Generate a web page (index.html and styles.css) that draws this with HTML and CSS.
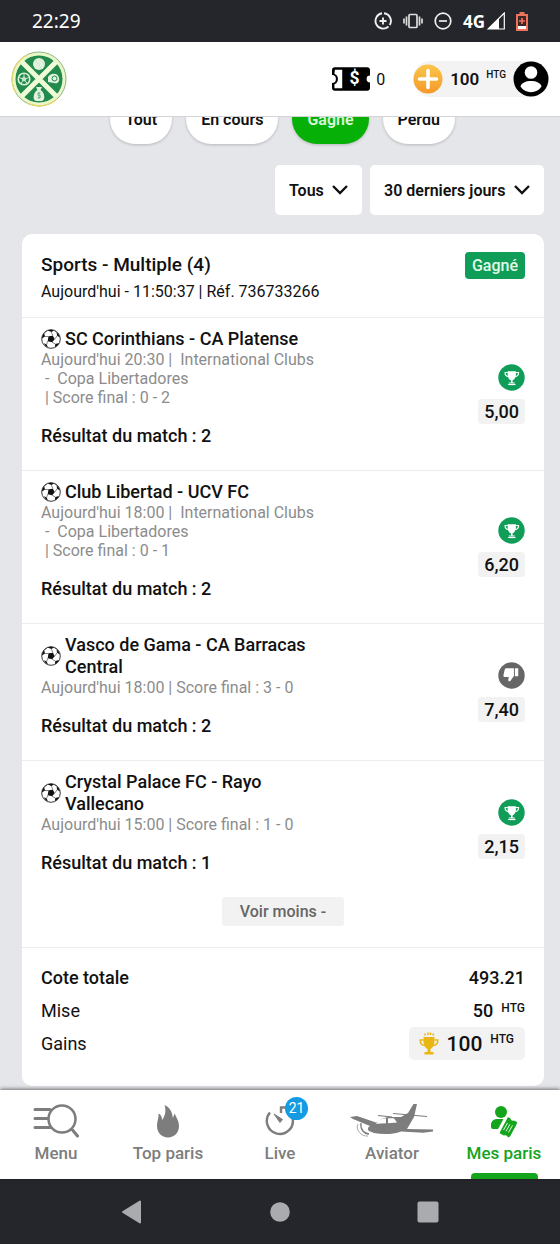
FILE: index.html
```html
<!DOCTYPE html>
<html lang="fr">
<head>
<meta charset="utf-8">
<meta name="viewport" content="width=device-width, initial-scale=1">
<title>Mes paris</title>
<link rel="stylesheet" href="styles.css">
</head>
<body>
<svg class="sprite" aria-hidden="true">
  <symbol id="ball" viewBox="0 0 20 20">
    <circle cx="10" cy="10" r="9.300" fill="#fff" stroke="#222" stroke-width=".9"/>
    <path d="M7.500 7.200l4.400-.4 1.800 3.400-2.600 3.100-4.400-1.100z" fill="#111"/>
    <path d="M6.500 1.600c2.200-1 4.800-1 6.500-.2l-2.600 1.700zM1 9.500c0-2 .8-4 2.200-5.300l.8 3.300zM15.500 3.200c1.800 1.200 3 3.200 3.400 5.300l-2.800-1.800zM3 14.300l2.700 1.200 1.300 3c-1.700-.6-3.200-2.200-4-4.200zM18 14c-.9 2-2.300 3.400-4.200 4.200l.5-3.200z" fill="#111"/>
    <path d="M10.400 3.100l1.500 3.700M4 7.500h3.500M16.100 6.700l-2.400 3.500M6.700 12.200l-1 3.300M11.100 13.300l3.200 1.700M3.200 4.200l3.300-2.600M13 1.400l2.500 1.800" fill="none" stroke="#333" stroke-width=".6"/>
  </symbol>
  <symbol id="won" viewBox="0 0 28 28">
    <circle cx="14" cy="14" r="13.700" fill="#0f9d58"/>
    <path d="M10 7.500h8.600v3.200c0 3.500-1.500 5.700-3.500 6.300v2.100h2.300v1h-6.200v-1h2.300V17c-2-.6-3.500-2.800-3.500-6.300z" fill="#fff"/>
    <path d="M10.200 8.800H7.300c0 2.600 1.500 4 3.600 4.200M18.400 8.800h2.900c0 2.600-1.500 4-3.600 4.200" fill="none" stroke="#fff" stroke-width="1.200"/>
    <path d="M10.500 21.300h7.600" stroke="#fff" stroke-width="1.200"/>
  </symbol>
  <symbol id="lost" viewBox="0 0 28 28">
    <circle cx="14" cy="14" r="13.700" fill="#666"/>
    <path d="M8.700 6.500H16.500v8l-3.900 5.400c-1.500.4-2.200-.5-1.900-2l.5-2.300H7.400c-1.400 0-2-.8-1.700-2L7 7.800c.3-.9.900-1.300 1.700-1.300zM17.500 6.500H21v8.300h-3.500z" fill="#fff"/>
  </symbol>
</svg>

<div class="status">
  <span class="clock">22:29</span>
  <div class="status-icons">
    <svg width="18" height="18" viewBox="0 0 18 18" fill="none" stroke="#eee" stroke-width="1.900"><path d="M8 1.300A7.700 7.700 0 1 0 14.500 14.500M10 1.300A7.700 7.700 0 0 1 15.800 12.900M9 5.500v7M5.500 9h7"/></svg>
    <svg width="20" height="16" viewBox="0 0 20 16" fill="none" stroke="#ddd" stroke-width="1.700"><rect x="6" y="1.500" width="8" height="13" rx="1"/><path d="M3.500 3.500v9M1 5.500v5M16.500 3.500v9M19 5.500v5"/></svg>
    <svg width="18" height="18" viewBox="0 0 18 18" fill="none" stroke="#eee" stroke-width="1.700"><circle cx="9" cy="9" r="7.800"/><path d="M5 9h8"/></svg>
    <span class="network">4G<svg width="18" height="18" viewBox="0 0 18 18"><path d="M17.300 1v16H1z" fill="none" stroke="#fff" stroke-width="1.200"/><path d="M12 6.300V17H1z" fill="#fff"/></svg></span>
    <svg width="12" height="19" viewBox="0 0 12 19"><path d="M3.500 0h5v2H12v17H0V2h3.500z" fill="#ee735c"/><path d="M2 4h8v10H2z" fill="#402525"/><path d="M2 14h8v3H2z" fill="#fff"/><path d="M6 6v6M3 9h6" stroke="#ee735c" stroke-width="1.700"/></svg>
  </div>
</div>

<header class="header">
  <a class="logo" href="#" aria-label="Accueil">
    <svg width="56" height="56" viewBox="0 0 56 56">
      <circle cx="28" cy="28" r="27" fill="#e9f7c9" stroke="#8fb58a"/>
      <path d="M16 4.200A27 27 0 0 0 5 42M16 51.900A27 27 0 0 0 46 48" fill="none" stroke="#ecd76c" stroke-width="1.200"/>
      <circle cx="28" cy="28" r="23.500" fill="#218a4c"/>
      <path d="M11 11l34 34M45 11L11 45" stroke="#effbd6" stroke-width="5"/>
      <circle cx="28" cy="13" r="6" fill="#e2f2df"/>
      <path d="M24 10c3 2 5 4 6 8M28 8c2 1 4 3 5 6" stroke="#cfe6d0" fill="none"/>
      <circle cx="13" cy="28" r="5.800" fill="#218a4c" stroke="#d8efd6" stroke-width="1.600"/>
      <path d="M13 26l2 1.500-.8 2.300h-2.400L11 27.500zM13 23v3M8 26.500l3 1M18 26.500l-3 1M9.800 32.500l2-2.700M16.200 32.500l-2-2.700" fill="#c4e5c8" stroke="#d8efd6" stroke-width=".9"/>
      <path d="M37 26c2-4 10-5 11 1 1 4-2 6-5 5l-6-1z" fill="#e2f2df"/>
      <circle cx="43.500" cy="27.500" r="2.500" fill="#e2f2df" stroke="#218a4c"/>
      <path d="M25 36h6l-1.500 3c4 2 5.500 10 1.500 11h-6c-4-1-2.500-9 1.500-11z" fill="#e2f2df"/>
      <path d="M29.500 42h-2.500v2.300h2.300v2.300h-2.600M28 41v7" fill="none" stroke="#5ca874" stroke-width=".8"/>
    </svg>
  </a>
  <div class="account">
    <div class="tickets">
      <svg width="38" height="24" viewBox="0 0 39 24"><path d="M3 0h33q3 0 3 3v5.500a3.500 3.500 0 0 0 0 7V21q0 3-3 3H3q-3 0-3-3v-5a4 4 0 0 0 0-8V3q0-3 3-3z" fill="#000"/><path d="M3 2.500h7.500v19H2.500V17.500a6 6 0 0 0 0-11z" fill="#fff"/><text x="23" y="17.500" class="ticket-sign">$</text></svg>
      <span>0</span>
    </div>
    <div class="balance">
      <button class="icon-button" type="button" aria-label="Déposer">
        <svg width="30" height="30" viewBox="0 0 30 30"><defs><linearGradient id="gold" x2="0" y2="1"><stop stop-color="#fbc64a"/><stop offset="1" stop-color="#f5982a"/></linearGradient></defs><circle cx="15" cy="15" r="14.500" fill="url(#gold)"/><path d="M15 6.500v17M6.500 15h17" stroke="#fff" stroke-width="3.600" stroke-linecap="round"/></svg>
      </button>
      <strong>100</strong><span class="unit">HTG</span>
      <button class="icon-button" type="button" aria-label="Profil">
        <svg width="36" height="36" viewBox="0 0 36 36"><circle cx="18" cy="18" r="17.500"/><circle cx="18" cy="11.500" r="6.300" fill="#fff"/><path d="M7.500 25.500c1-7.500 20-7.500 21 0-4.500 7.500-16.500 7.500-21 0z" fill="#fff"/></svg>
      </button>
    </div>
  </div>
</header>

<main class="main">
  <div class="tabs">
    <button class="tab" type="button">Tout</button>
    <button class="tab" type="button">En cours</button>
    <button class="tab tab-active" type="button">Gagné</button>
    <button class="tab" type="button">Perdu</button>
  </div>

  <div class="filters">
    <div class="filter">
      <select aria-label="Type de pari"><option>Tous</option></select>
      <svg class="chevron" width="16" height="10" viewBox="0 0 16 10"><path d="M1 1l7 7 7-7" fill="none" stroke="#111" stroke-width="2.400"/></svg>
    </div>
    <div class="filter">
      <select aria-label="Période"><option>30 derniers jours</option></select>
      <svg class="chevron" width="16" height="10" viewBox="0 0 16 10"><path d="M1 1l7 7 7-7" fill="none" stroke="#111" stroke-width="2.400"/></svg>
    </div>
  </div>

  <article class="card">
    <div class="card-head">
      <div>
        <h1 class="card-title">Sports - Multiple (4)</h1>
        <p class="card-ref">Aujourd'hui - 11:50:37 | Réf. 736733266</p>
      </div>
      <span class="badge">Gagné</span>
    </div>

    <section class="leg">
      <div class="leg-body">
        <h2 class="leg-title"><svg class="ball"><use href="#ball"/></svg><span>SC Corinthians - CA Platense</span></h2>
        <p class="leg-meta">Aujourd'hui 20:30 |&nbsp; International Clubs<br>&nbsp;-&nbsp; Copa Libertadores<br>&nbsp;| Score final : 0 - 2</p>
        <p class="leg-pick">Résultat du match : 2</p>
      </div>
      <div class="leg-side"><svg class="outcome"><use href="#won"/></svg><span class="odds">5,00</span></div>
    </section>

    <section class="leg">
      <div class="leg-body">
        <h2 class="leg-title"><svg class="ball"><use href="#ball"/></svg><span>Club Libertad - UCV FC</span></h2>
        <p class="leg-meta">Aujourd'hui 18:00 |&nbsp; International Clubs<br>&nbsp;-&nbsp; Copa Libertadores<br>&nbsp;| Score final : 0 - 1</p>
        <p class="leg-pick">Résultat du match : 2</p>
      </div>
      <div class="leg-side"><svg class="outcome"><use href="#won"/></svg><span class="odds">6,20</span></div>
    </section>

    <section class="leg">
      <div class="leg-body">
        <h2 class="leg-title"><svg class="ball"><use href="#ball"/></svg><span>Vasco de Gama - CA Barracas Central</span></h2>
        <p class="leg-meta">Aujourd'hui 18:00 | Score final : 3 - 0</p>
        <p class="leg-pick">Résultat du match : 2</p>
      </div>
      <div class="leg-side"><svg class="outcome"><use href="#lost"/></svg><span class="odds">7,40</span></div>
    </section>

    <section class="leg">
      <div class="leg-body">
        <h2 class="leg-title"><svg class="ball"><use href="#ball"/></svg><span>Crystal Palace FC - Rayo Vallecano</span></h2>
        <p class="leg-meta">Aujourd'hui 15:00 | Score final : 1 - 0</p>
        <p class="leg-pick">Résultat du match : 1</p>
      </div>
      <div class="leg-side"><svg class="outcome"><use href="#won"/></svg><span class="odds">2,15</span></div>
    </section>

    <div class="more"><button class="more-button" type="button">Voir moins -</button></div>

    <dl class="totals">
      <div class="total"><dt class="total-name">Cote totale</dt><dd>493.21</dd></div>
      <div class="total"><dt>Mise</dt><dd>50<span class="unit">HTG</span></dd></div>
      <div class="total"><dt>Gains</dt><dd class="winnings">
        <svg width="20" height="24" viewBox="0 0 20 24"><path d="M4.500 5h11v4c0 4.500-2 7-4 8v3h3v2.500h-9V20h3v-3c-2-1-4-3.500-4-8z" fill="#e9b614"/><path d="M4.500 8H1.200c0 3.500 2 5.500 4.800 5.500M15.500 8h3.300c0 3.500-2 5.500-4.800 5.500M6 1.500v2M9 .5v2.500M11.500 .5v2.500M14.500 1.500l-.5 2" fill="none" stroke="#e9b614" stroke-width="1.500"/></svg>
        100<span class="unit">HTG</span></dd></div>
    </dl>
  </article>
</main>

<nav class="nav">
  <a class="nav-item" href="#">
    <svg width="46" height="36" viewBox="0 0 46 36" fill="none" stroke="#7d7d7d" stroke-width="3" stroke-linecap="round"><path d="M2 6.500h15M2 15.500h12M2 24.500h16" /><circle cx="29" cy="16" r="13.500" stroke-width="2.500"/><path d="M39.500 27l5 6"/></svg>
    <span>Menu</span>
  </a>
  <a class="nav-item" href="#">
    <svg width="24" height="36" viewBox="0 0 24 36"><path d="M8.500 2c5 2 8 7 8.300 13l2-4.500c1.200 4 4.200 7 4.200 12.500C23 29.500 18.500 34.500 12 34.500S1 29.500 1 23c0-5 2-8 1.500-12.500C5 11.500 6 14 6.200 17 9 13 10.500 8 8.500 2z" fill="#7d7d7d"/></svg>
    <span>Top paris</span>
  </a>
  <a class="nav-item" href="#">
    <span class="live">
      <svg width="30" height="36" viewBox="0 0 30 36"><path d="M5 9.500A13 13 0 1 0 27.500 15M16 10V4.500h7" fill="none" stroke="#7d7d7d" stroke-width="2.400"/><path d="M9 11l8.500 5.500-2.500 3z" fill="#7d7d7d" stroke="#7d7d7d" stroke-linejoin="round"/></svg>
      <span class="count">21</span>
    </span>
    <span>Live</span>
  </a>
  <a class="nav-item" href="#">
    <svg width="84" height="36" viewBox="0 0 84 36" fill="#7d7d7d"><path d="M0 14l7-1 19 6.500c5-3 8-5.500 14-5.500h11l7-4 5.500-9H67l-3 13-7 12 26 .5v2l-10 1.300-22-1.300c-8 3-18 3.300-27 1.500l-5-2c-2-2-1-4 1-5L3 16z"/><path d="M27 18.800c3-2.300 5.500-3.300 9-3.500v5l-10 .5zM38 15.300h6l3 4.200-9 .8z" fill="#fff"/><path d="M43 10.500l34 3M28 12.500l14 1.500" fill="none" stroke="#7d7d7d" stroke-width="1.200"/><path d="M8 21c-3 5 3 13 10 12" fill="none" stroke="#aaa"/><path d="M11 20c-1 6 3 11 8 11" fill="none" stroke="#7d7d7d" stroke-width="1.300"/></svg>
    <span>Aviator</span>
  </a>
  <a class="nav-item nav-active" href="#" aria-current="page">
    <svg width="28" height="36" viewBox="0 0 28 36" fill="#14a51c"><circle cx="11" cy="9" r="6"/><path d="M1 22c0-4 3-6 6-6h6.500L8 26H3q-2 0-2-2z"/><path d="M18 14l2.500 1.500c.5 2 2 2.500 3.500 2l3 1.500c.5 1-.5 1.500-.5 2.500l-6.500 12-2 1c-1-2-2-2.500-4-2L10 30.500c-.5-1 .5-1.500.5-2.500z"/><path d="M17.500 20l-4 7M20 21.200l-4 7M22.500 22.400l-4 7" stroke="#fff" stroke-width=".9"/></svg>
    <span>Mes paris</span>
  </a>
</nav>

<div class="system">
  <button class="icon-button" type="button" aria-label="Retour"><svg width="22" height="24" viewBox="0 0 22 24"><path d="M19 1.500v21L2 12z" fill="#a9abae" stroke="#a9abae" stroke-width="2" stroke-linejoin="round"/></svg></button>
  <button class="icon-button" type="button" aria-label="Accueil du téléphone"><svg width="20" height="20" viewBox="0 0 20 20"><circle cx="10" cy="10" r="9.800" fill="#a9abae"/></svg></button>
  <button class="icon-button" type="button" aria-label="Applications récentes"><svg width="22" height="22" viewBox="0 0 22 22"><rect x=".5" y=".5" width="21" height="21" rx="2" fill="#a9abae"/></svg></button>
</div>
</body>
</html>
```

FILE: styles.css
```css
* {
  box-sizing: border-box;
}

body {
  margin: 0;
  min-height: 100vh;
  display: flex;
  flex-direction: column;
  background: #e4e6ea;
  color: #111;
  font-family: Roboto, "Liberation Sans", sans-serif;
  font-size: 16px;
}

h1, h2, p, dl, dd {
  margin: 0;
}

button, select {
  border: 0;
  font: inherit;
  color: inherit;
}

svg {
  display: block;
  flex: none;
}

.sprite {
  position: absolute;
  width: 0;
  height: 0;
}

.icon-button {
  padding: 0;
  background: none;
}

.status {
  display: flex;
  align-items: center;
  justify-content: space-between;
  height: 42px;
  padding: 0 32px;
  background: #24262b;
  color: #fff;
}

.clock {
  font-family: "Noto Sans", sans-serif;
  font-size: 19px;
}

.status-icons {
  display: flex;
  align-items: center;
  gap: 11px;
}

.network {
  display: flex;
  align-items: center;
  gap: 2px;
  font-family: "Open Sans", sans-serif;
  font-size: 17px;
  font-weight: 700;
}

.header {
  position: relative;
  z-index: 2;
  display: flex;
  align-items: center;
  justify-content: space-between;
  height: 75px;
  padding: 0 11px;
  background: #fff;
  border-bottom: 1px solid #d3d4d6;
}

.account {
  display: flex;
  align-items: center;
  gap: 28px;
}

.tickets {
  display: flex;
  align-items: center;
  gap: 6px;
}

.ticket-sign {
  fill: #fff;
  font-size: 18px;
  font-weight: 700;
  text-anchor: middle;
}

.balance {
  display: flex;
  align-items: center;
  gap: 7px;
  height: 36px;
  border-radius: 18px;
  background: #f3f3f3;
  font-weight: 500;
}

.balance strong {
  font-size: 17px;
  font-weight: 600;
}

.unit {
  align-self: flex-start;
  font-size: 12px;
  line-height: 16px;
  font-weight: 500;
}

.balance .unit {
  padding-top: 6px;
  font-size: 10px;
}

.main {
  flex: 1;
  padding-bottom: 4px;
}

.tabs {
  display: flex;
  justify-content: center;
  gap: 14px;
  margin-top: -23px;
  padding-left: 5px;
}

.tab {
  height: 50px;
  padding: 0 15px;
  border-radius: 25px;
  background: #fff;
  font-weight: 600;
  box-shadow: 0 1px 3px #0003;
}

.tab-active {
  background: #06b006;
  color: #d9f7d9;
}

.filters {
  display: flex;
  justify-content: flex-end;
  gap: 8px;
  padding: 21px 16px 19px;
}

.filter {
  position: relative;
}

.filter select {
  appearance: none;
  height: 50px;
  padding: 0 38px 0 14px;
  border-radius: 5px;
  background: #fff;
  font-weight: 600;
}

.chevron {
  position: absolute;
  top: 20px;
  right: 14px;
  pointer-events: none;
}

.card {
  margin: 0 16px 0 22px;
  border-radius: 10px;
  background: #fff;
}

.card-head {
  display: flex;
  align-items: flex-start;
  justify-content: space-between;
  padding: 18px 19px 11px;
  border-bottom: 1px solid #ececec;
}

.card-title {
  font-size: 19px;
  line-height: 26px;
  font-weight: 500;
}

.card-ref {
  line-height: 28px;
}

.badge {
  padding: 0 7px;
  border-radius: 4px;
  background: #0f9d58;
  color: #e2fbe9;
  line-height: 27px;
  font-weight: 500;
}

.leg {
  display: flex;
  align-items: center;
  justify-content: space-between;
  padding: 0 19px;
}

.leg + .leg {
  border-top: 1px solid #ececec;
}

.leg-body {
  width: 280px;
  padding: 10px 0 23px;
}

.leg-title {
  display: flex;
  align-items: center;
  gap: 4px;
  font-size: 18px;
  line-height: 22px;
  font-weight: 500;
}

.ball {
  width: 20px;
  height: 20px;
}

.leg-meta {
  color: #8c8c8c;
  line-height: 19px;
}

.leg-pick {
  margin-top: 18px;
  font-size: 18px;
  line-height: 22px;
  font-weight: 500;
}

.leg-side {
  display: flex;
  flex-direction: column;
  align-items: flex-end;
  gap: 8px;
}

.outcome {
  width: 27px;
  height: 27px;
}

.odds {
  padding: 0 6px;
  border-radius: 4px;
  background: #f2f2f2;
  font-size: 18px;
  line-height: 25px;
  font-weight: 500;
}

.more {
  display: flex;
  justify-content: center;
  padding-bottom: 21px;
  border-bottom: 1px solid #ececec;
}

.more-button {
  height: 29px;
  padding: 0 18px;
  border-radius: 3px;
  background: #f2f2f2;
  color: #666;
  font-weight: 500;
}

.totals {
  padding: 13px 19px 26px;
  font-size: 18px;
}

.total {
  display: flex;
  align-items: center;
  justify-content: space-between;
  height: 33px;
}

.total-name {
  font-weight: 500;
}

.total dd {
  display: flex;
  align-items: center;
  gap: 8px;
  font-weight: 500;
}

.total .winnings {
  height: 33px;
  padding: 0 11px 0 10px;
  border-radius: 5px;
  background: #f2f2f2;
  font-size: 21px;
}

.winnings .unit {
  padding-top: 4px;
}

.nav {
  position: relative;
  display: grid;
  grid-template-columns: repeat(5, 1fr);
  height: 89px;
  background: #fff;
  box-shadow: 0 -1px 4px #0008;
}

.nav-item {
  display: flex;
  flex-direction: column;
  align-items: center;
  gap: 3px;
  padding-top: 13px;
  color: #7d7d7d;
  font-size: 17px;
  line-height: 22px;
  text-decoration: none;
  font-weight: 500;
}

.live {
  position: relative;
}

.count {
  position: absolute;
  top: -6px;
  left: 20px;
  width: 23px;
  height: 23px;
  border-radius: 50%;
  background: #149be4;
  color: #fff;
  font-size: 14px;
  line-height: 23px;
  text-align: center;
  font-weight: 400;
}

.nav-active {
  color: #14a51c;
}

.nav-active::after {
  content: "";
  width: 67px;
  height: 6px;
  margin-top: auto;
  border-radius: 4px 4px 0 0;
  background: #14a51c;
}

.system {
  display: flex;
  align-items: center;
  justify-content: center;
  gap: 127px;
  height: 65px;
  background: #24262b;
}
```
